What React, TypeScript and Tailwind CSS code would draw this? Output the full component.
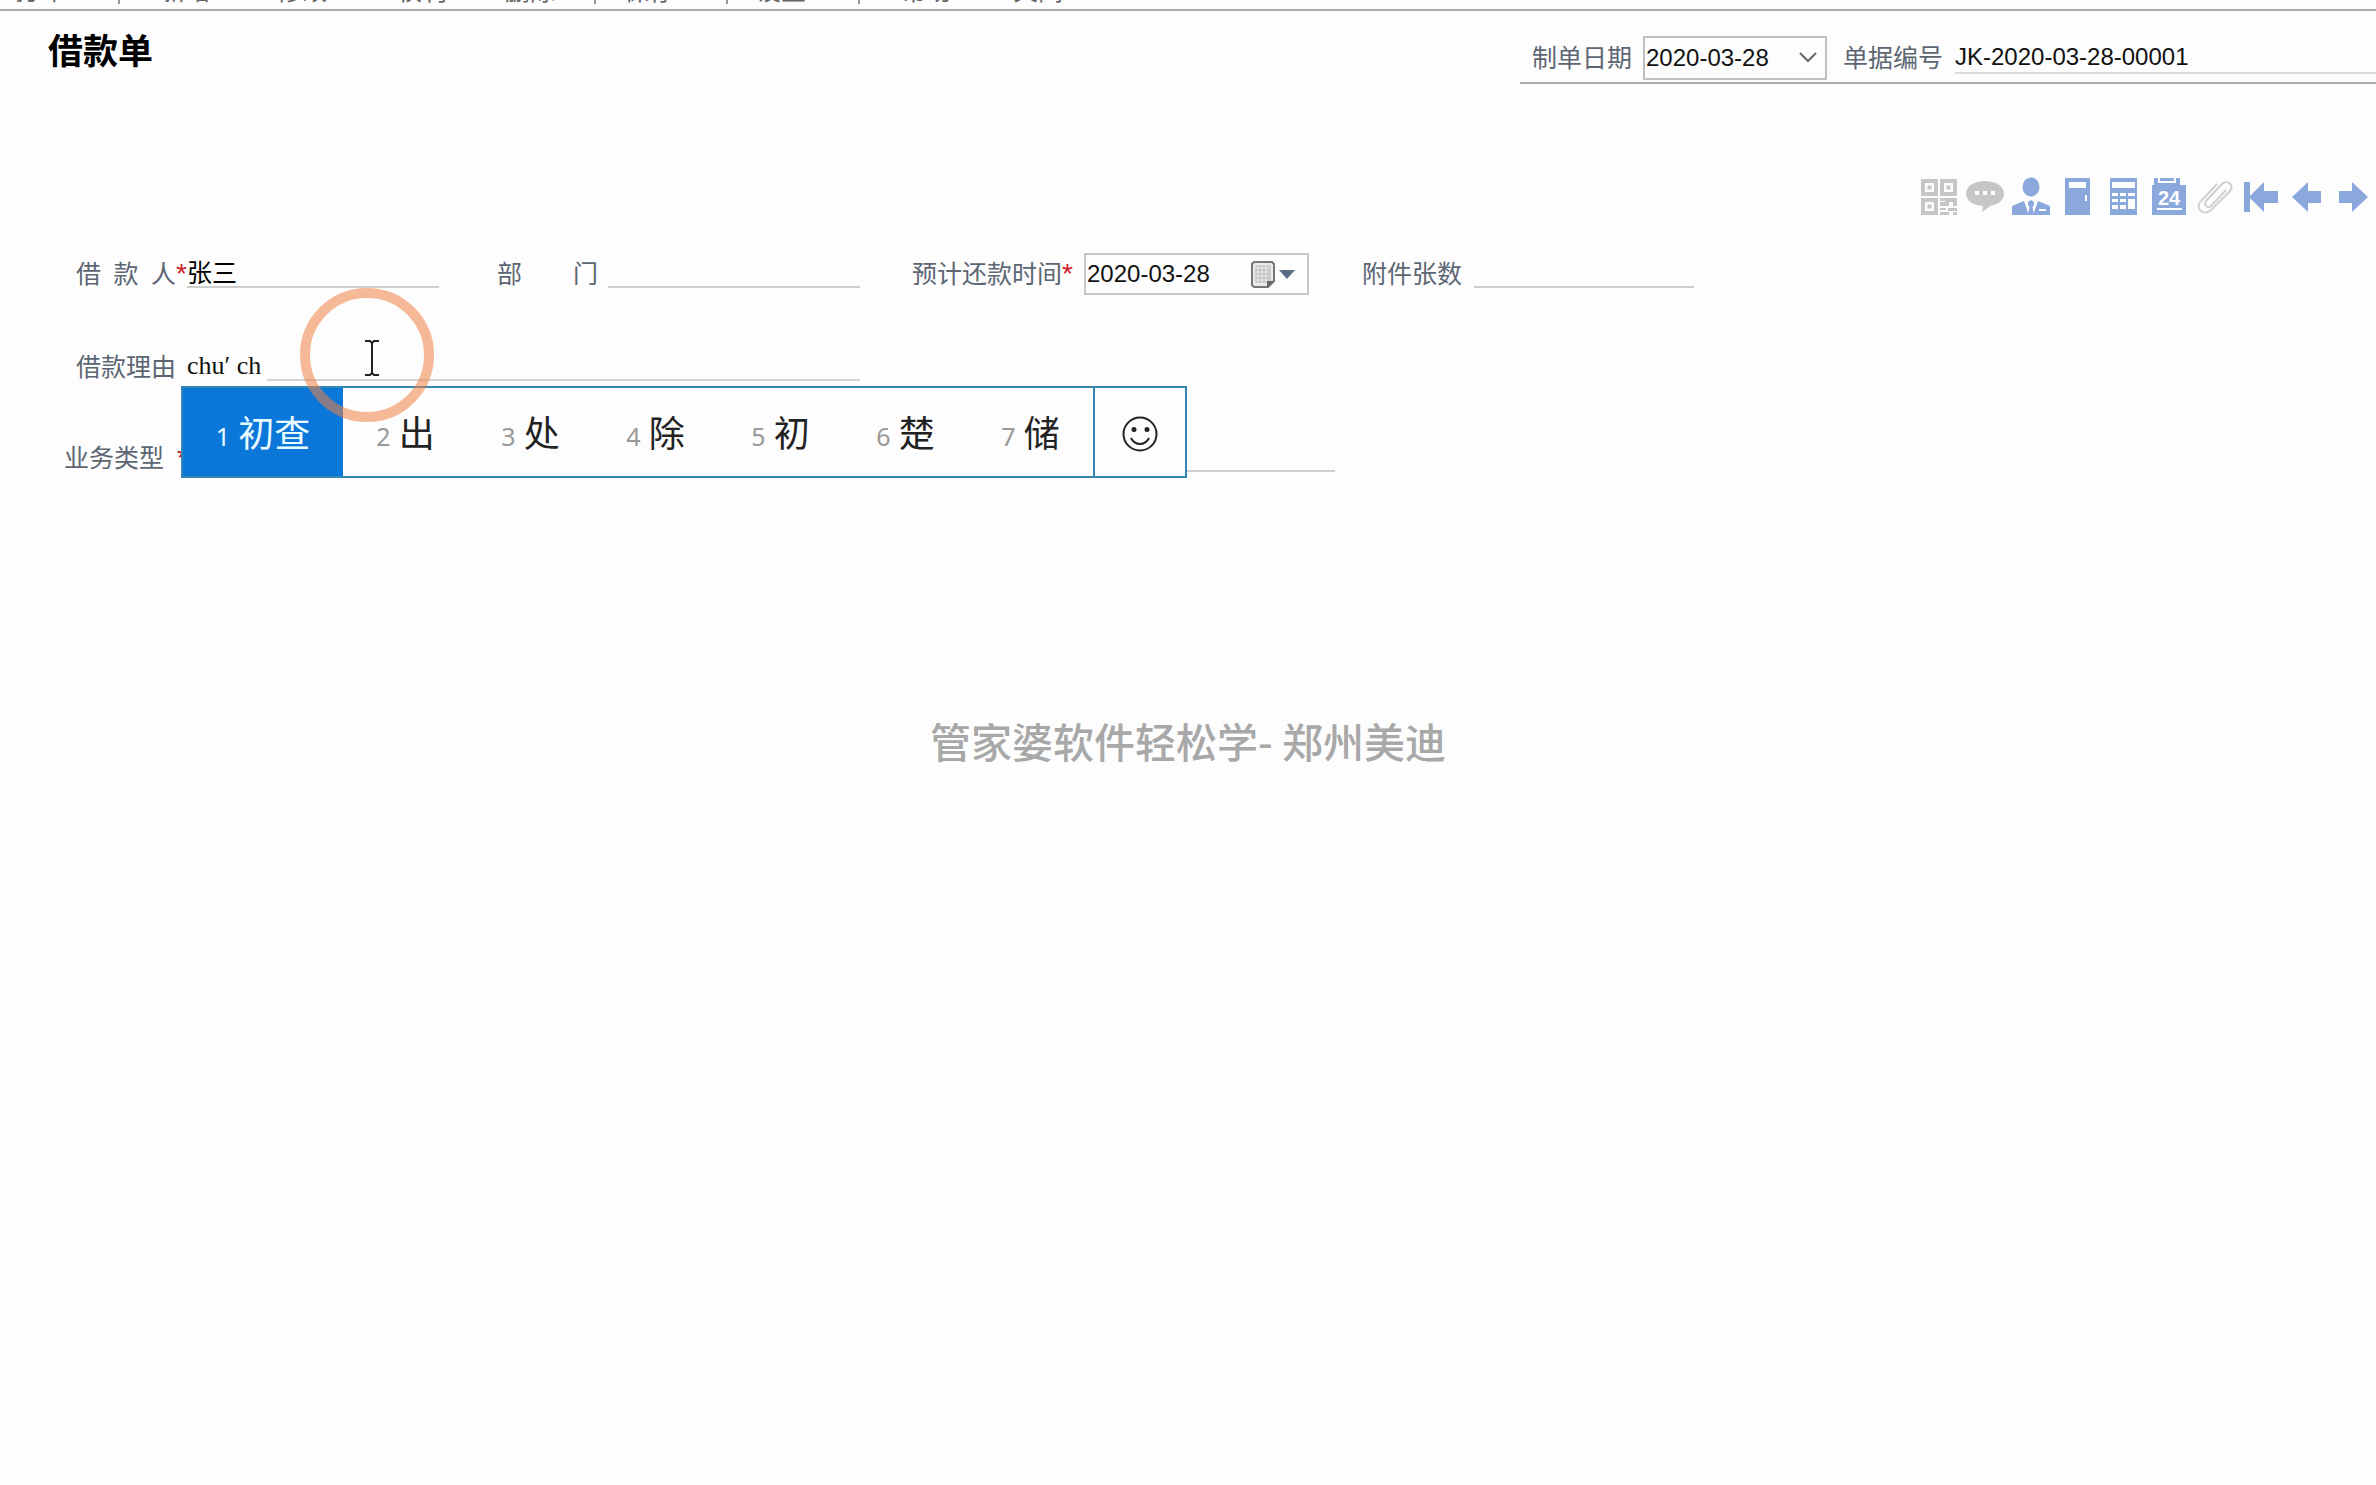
import type { ReactNode } from "react";

const blue = "#8ba8dc";
const gray = "#c6c6c6";

const menu = [
  { label: "打印", cell: "w-[120px] pl-[15px] border-r-2" },
  { label: "新增", cell: "w-[116px] pl-[41px]" },
  { label: "修改", cell: "w-[120px] pl-[41px]" },
  { label: "权利", cell: "w-[108px] pl-[41px]" },
  { label: "删除", cell: "w-[132px] pl-[41px] border-r-2" },
  { label: "保存", cell: "w-[132px] pl-[28px] border-r-2" },
  { label: "设置", cell: "w-[132px] pl-[28px] border-r-2" },
  { label: "帮助", cell: "w-[112px] pl-[41px]" },
  { label: "关闭", cell: "w-[112px] pl-[41px]" },
];

const candidates = ["初查", "出", "处", "除", "初", "楚", "储"];

const tools: { name: string; icon: ReactNode }[] = [
  {
    name: "二维码",
    icon: (
      <g fill={gray}>
        <path
          fillRule="evenodd"
          d="M2 2h17v17H2zM6 6v9h9V6zM21 2h17v17H21zM25 6v9h9V6zM2 21h17v17H2zM6 25v9h9v-9z"
        />
        <path d="M8.500 8.500h4v4h-4zM27.500 8.500h4v4h-4zM8.500 27.500h4v4h-4zM21 21h17v8h-4v-4h-4v4h-9v-4h5v-1h-5zM21 31h6v2h-6zM29 31h9v3h-9zM21 35h9v3h-9zM34 35h4v3h-4z" />
      </g>
    ),
  },
  {
    name: "消息",
    icon: (
      <g>
        <path d="M20 4c10.500 0 19 5 19 12.500 0 7-6 11-13 12L17 35l1-6C8 28.500 1 23.500 1 16.500 1 9 9.500 4 20 4z" fill={gray} />
        <path d="M10 14h4v4h-4zM18 14h4v4h-4zM26 14h4v4h-4z" fill="#fdfdfd" />
      </g>
    ),
  },
  {
    name: "用户",
    icon: (
      <g fill={blue}>
        <ellipse cx="20" cy="10" rx="8.500" ry="9.500" />
        <path d="M1 38V29l12-5 5 14zM39 38V29l-12-5-5 14z" />
        <path d="M17 25l3-2 3 2v3l-1.500 2L23 38h-6l1.500-8L17 28z" />
        <path d="M28 32h7v2h-7z" fill="#fdfdfd" />
      </g>
    ),
  },
  {
    name: "账簿",
    icon: (
      <g>
        <path d="M8 1h25v37H8z" fill={blue} />
        <path d="M12 5h17v6H12zM28 18h2v6h-2z" fill="#fdfdfd" />
      </g>
    ),
  },
  {
    name: "计算器",
    icon: (
      <g>
        <path d="M7 1h27v37H7z" fill={blue} />
        <path d="M9 5h23v6H9zM9 16h6v3H9zM17 16h6v3h-6zM25 16h7v3h-7zM9 22h6v3H9zM17 22h6v3h-6zM9 28h6v4H9zM17 28h6v4h-6zM25 22h7v10h-7z" fill="#fdfdfd" />
      </g>
    ),
  },
  {
    name: "日历",
    icon: (
      <g>
        <path d="M3 8h2V1h4v5h18V1h4v7h6v30H3z" fill={blue} />
        <path d="M11 1h14v3H11z" fill={blue} />
        <path d="M8 31h25v2H8z" fill="#fdfdfd" />
        <text x="20" y="28" textAnchor="middle" fontSize="20" fontWeight="700" fontFamily="Liberation Sans, sans-serif" fill="#fdfdfd">
          24
        </text>
      </g>
    ),
  },
  {
    name: "附件",
    icon: (
      <path
        d="M31 13L16 29c-3 3-8-1-5-5L27 7c5-5 13 1 8 7L16 33c-6 6-16 0-11-8L22 7"
        fill="none"
        stroke="#cfcfcf"
        strokeWidth="2"
      />
    ),
  },
  { name: "首张", icon: <path d="M3 5h6v14L23 5v9h14v12H23v9L9 21v14H3z" fill={blue} /> },
  { name: "上一张", icon: <path d="M5 20L21 5v9h13v12H21v9z" fill={blue} /> },
  { name: "下一张", icon: <path d="M35 20L19 5v9H6v12h13v9z" fill={blue} /> },
];

function Star() {
  return <span className="text-[28px] text-[#d0202a]">*</span>;
}

function Toolbar() {
  return (
    <nav className="flex h-[11px] items-end overflow-hidden border-b-2 border-[#ababab] pb-[5px]">
      {menu.map((item) => (
        <button
          key={item.label}
          className={`h-8 shrink-0 border-[#999] text-left text-[25px] leading-[38px] text-[#666] ${item.cell}`}
        >
          {item.label}
        </button>
      ))}
    </nav>
  );
}

function ImeBar() {
  return (
    <div className="absolute top-[386px] left-[181px] flex h-[92px] border-2 border-[#3487b4] bg-[#fdfdfd] font-['Noto_Sans','Noto_Sans_CJK_SC',sans-serif]">
      {candidates.map((word, index) => (
        <button
          key={word}
          className={
            index === 0
              ? "flex w-[160px] items-center justify-center gap-2 bg-[#0a77d9] pt-1 text-[#e8fbff]"
              : "flex w-[125px] items-center justify-center gap-2 pt-1 text-[#222]"
          }
        >
          <span className={index === 0 ? "pt-1 text-[25px]" : "pt-1 text-[25px] text-[#999]"}>
            {index + 1}
          </span>
          <span className="text-[36px] leading-none">{word}</span>
        </button>
      ))}
      <button aria-label="表情" className="flex w-[92px] items-center justify-center border-l-2 border-[#3487b4] pt-1">
        <svg viewBox="0 0 36 36" className="size-9" fill="none" stroke="#222" strokeWidth="2">
          <circle cx="18" cy="18" r="16.500" />
          <path d="M9 22c4 8 14 8 18 0" />
          <circle cx="12" cy="13.500" r="1.500" fill="#222" />
          <circle cx="25" cy="13.500" r="1.500" fill="#222" />
        </svg>
      </button>
    </div>
  );
}

function Pointer() {
  return (
    <>
      <div className="pointer-events-none absolute top-[288px] left-[300px] size-[134px] rounded-full border-10 border-[#f08246]/55" />
      <svg viewBox="0 0 16 36" className="pointer-events-none absolute top-[340px] left-[364px] h-9 w-4" fill="none" stroke="#222" strokeWidth="2">
        <path d="M1 1h5l2 2 2-2h5M8 3v30M1 35h5l2-2 2 2h5" />
      </svg>
    </>
  );
}

export default function App() {
  return (
    <main className="relative min-h-screen overflow-hidden bg-[#fdfdfd] font-['Liberation_Sans','Noto_Sans_CJK_SC',sans-serif] text-[25px] leading-8 text-[#5c6673]">
      <Toolbar />
      <header className="flex items-start justify-between pl-12">
        <h1 className="pt-4 text-[35px] leading-[50px] font-bold text-black">借款单</h1>
        <div className="flex h-[73px] w-[856px] items-center border-b-2 border-[#ababab] pt-[22px] pl-3">
          <label htmlFor="made" className="w-[111px]">制单日期</label>
          <div className="relative">
            <select id="made" className="h-11 w-[184px] appearance-none border-2 border-[#c0c0c0] pl-px text-[24px] text-[#111]">
              <option>2020-03-28</option>
            </select>
            <svg viewBox="0 0 18 12" className="pointer-events-none absolute top-4 right-[10px] h-3 w-[18px]" fill="none" stroke="#666" strokeWidth="2">
              <path d="M1 1l8 8 8-8" />
            </svg>
          </div>
          <label htmlFor="number" className="w-[111px] pl-4 whitespace-nowrap">单据编号</label>
          <input
            id="number"
            defaultValue="JK-2020-03-28-00001"
            className="ml-[17px] h-8 min-w-0 flex-1 border-b-2 border-[#dcdcdc] text-[24px] text-[#111]"
          />
        </div>
      </header>

      <div className="flex justify-end pt-[93px]">
        {tools.map((tool) => (
          <button key={tool.name} aria-label={tool.name} className="flex w-[46px] justify-center">
            <svg viewBox="0 0 40 40" className="size-10">
              {tool.icon}
            </svg>
          </button>
        ))}
      </div>

      <form className="pt-[35px]">
        <div className="flex h-11 items-center pl-[76px]">
          <label htmlFor="borrower" className="flex w-[111px] whitespace-nowrap">
            <span className="flex w-[100px] justify-between">
              <span>借</span>
              <span>款</span>
              <span>人</span>
            </span>
            <Star />
          </label>
          <input id="borrower" defaultValue="张三" className="h-7 w-[252px] border-b-2 border-[#cfcfcf] text-black" />
          <label htmlFor="dept" className="ml-[58px] flex w-[101px] justify-between">
            <span>部</span>
            <span>门</span>
          </label>
          <input id="dept" className="ml-[10px] h-7 w-[252px] border-b-2 border-[#cfcfcf]" />
          <label htmlFor="due" className="ml-[52px] w-[172px] whitespace-nowrap">
            预计还款时间
            <Star />
          </label>
          <div className="relative">
            <input
              id="due"
              defaultValue="2020-03-28"
              className="h-[42px] w-[225px] border-2 border-[#c8c8c8] pl-px text-[24px] text-[#111]"
            />
            <button type="button" aria-label="选择日期" className="absolute top-2 right-[14px] flex">
              <svg viewBox="0 0 44 28" className="h-7 w-11">
                <path d="M3 1h18l2 2v17l-6 6H3l-2-2V3z" fill="#e9e9ea" stroke="#777" strokeWidth="2" />
                <path d="M5 5h14v16H5zM5 9h14M5 13h14M5 17h14M9 5v16M13 5v16M17 5v16" fill="none" stroke="#b9b9bd" />
                <path d="M16 26v-6h7z" fill="#666" />
                <path d="M28 9h16l-8 9z" fill="#5a6d86" />
              </svg>
            </button>
          </div>
          <label htmlFor="attach" className="ml-[53px] w-[112px]">附件张数</label>
          <input id="attach" className="h-7 w-[220px] border-b-2 border-[#cfcfcf]" />
        </div>

        <div className="mt-[49px] flex h-11 items-center pl-[76px]">
          <label htmlFor="reason" className="w-[111px]">借款理由</label>
          <div className="relative flex">
            <input
              id="reason"
              defaultValue="chu′ ch"
              className="h-7 w-[673px] border-b-2 border-[#d4d4d4] font-['Liberation_Serif','Noto_Sans_CJK_SC',serif] text-[26px] text-[#111]"
            />
            {/* the text being composed hides the underline */}
            <span className="absolute bottom-0 left-0 h-[2px] w-20 bg-[#fdfdfd]" />
          </div>
        </div>

        <div className="mt-[47px] flex h-11 items-center pl-[64px]">
          <label htmlFor="kind" className="flex w-[123px] gap-[13px] whitespace-nowrap">
            业务类型
            <Star />
          </label>
          <input id="kind" className="h-7 w-[1148px] border-b-2 border-[#cfcfcf]" />
        </div>
      </form>

      <ImeBar />
      <Pointer />
      <p className="pointer-events-none absolute inset-x-0 top-1/2 -translate-y-1/2 pb-[6px] text-center font-['Noto_Sans_CJK_SC',sans-serif] text-[41px] leading-[60px] font-medium text-[#a8a8a8]">
        管家婆软件轻松学- 郑州美迪
      </p>
    </main>
  );
}
